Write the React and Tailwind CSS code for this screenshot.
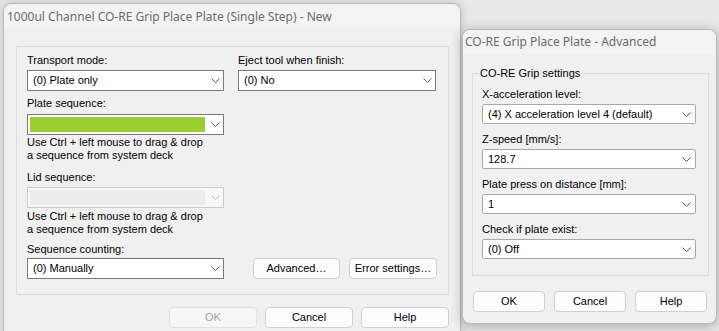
function Chevron({ disabled }) {
  return (
    <svg width="9" height="5" viewBox="0 0 9 5" className="shrink-0">
      <polyline points="0.5,0.5 4.5,4.5 8.5,0.5" fill="none" stroke={disabled ? '#c4c4c4' : '#5a5a5a'} strokeWidth="1" />
    </svg>
  );
}

function Combo({ value, fill }) {
  return (
    <div className="flex h-[21px] items-center border border-[#7a7a7a] bg-white pr-[3px]">
      {fill ? (
        <div className="ml-[2px] mr-auto h-[15px] w-[175px] bg-[#9acd32]" />
      ) : (
        <span className="mr-auto pl-[5px] leading-[15px]">{value}</span>
      )}
      <Chevron />
    </div>
  );
}

function DisabledCombo() {
  return (
    <div className="flex h-[21px] items-center border border-[#cccccc] bg-[#f7f7f7] pr-[3px]">
      <div className="ml-[2px] mr-auto h-[15px] w-[175px] bg-[#ececec]" />
      <Chevron disabled />
    </div>
  );
}

function SmallCombo({ value }) {
  return (
    <div className="flex h-[20px] items-center rounded-[2px] border border-[#a9a9a9] bg-white pr-[4px]">
      <span className="mr-auto pl-[5px] leading-[15px]">{value}</span>
      <Chevron />
    </div>
  );
}

function Button({ children, className = '', disabled }) {
  return (
    <button
      type="button"
      className={`flex h-[21px] items-center justify-center rounded-[4px] border leading-[15px] ${
        disabled ? 'border-[#e2e2e2] bg-[#f6f6f6] text-[#a3a3a3]' : 'border-[#d0d0d0] bg-[#fdfdfd] text-black'
      } ${className}`}
    >
      {children}
    </button>
  );
}

function Label({ children, className = '' }) {
  return <div className={`leading-[15px] ${className}`}>{children}</div>;
}

function Hint({ className = '' }) {
  return (
    <div className={`leading-[13px] ${className}`}>
      Use Ctrl + left mouse to drag &amp; drop
      <br />
      a sequence from system deck
    </div>
  );
}

function MainDialog() {
  return (
    <div className="absolute left-[3px] top-[3px] h-[345px] w-[458px] rounded-t-[8px] border border-[#b9b9b9] bg-[#f0f0f0] shadow-[0_0_10px_rgba(0,0,0,0.18)]">
      <div className="h-[25px] rounded-t-[8px] bg-[#f3f3f3] pl-[3px] font-['Noto_Sans',sans-serif] text-[12px] leading-[25px] text-[#6b6b6b]">
        1000ul Channel CO-RE Grip Place Plate (Single Step) - New
      </div>
      <div className="ml-[12px] mr-[11px] mt-[17px] h-[249px] border border-[#dcdcdc] pl-[10px] pt-[6px]">
        <div className="grid grid-cols-[197px_198px] gap-x-[14px]">
          <div className="flex flex-col">
            <Label className="mb-[2px]">Transport mode:</Label>
            <Combo value="(0) Plate only" />
            <Label className="mb-[3px] mt-[5px]">Plate sequence:</Label>
            <Combo fill />
            <Hint className="mt-[1px]" />
            <Label className="mb-[2px] mt-[8px]">Lid sequence:</Label>
            <DisabledCombo />
            <Hint className="mt-[2px]" />
            <Label className="mb-[1px] mt-[6px]">Sequence counting:</Label>
            <Combo value="(0) Manually" />
          </div>
          <div className="flex flex-col">
            <Label className="mb-[2px]">Eject tool when finish:</Label>
            <Combo value="(0) No" />
            <div className="mt-auto flex justify-end gap-[9px]">
              <Button className="w-[87px]">Advanced…</Button>
              <Button className="mr-[-1px] w-[88px]">Error settings…</Button>
            </div>
          </div>
        </div>
      </div>
      <div className="mr-[11px] mt-[12px] flex justify-end gap-[8px]">
        <Button className="w-[88px]" disabled>
          OK
        </Button>
        <Button className="w-[88px]">Cancel</Button>
        <Button className="w-[88px]">Help</Button>
      </div>
    </div>
  );
}

function AdvancedDialog() {
  return (
    <div className="absolute left-[462px] top-[29px] h-[295px] w-[255px] rounded-[8px] border border-[#b9b9b9] bg-[#f0f0f0] shadow-[0_2px_12px_rgba(0,0,0,0.28)]">
      <div className="h-[24px] rounded-t-[8px] bg-[#f3f3f3] pl-[2px] font-['Noto_Sans',sans-serif] text-[12px] leading-[24px] text-[#6b6b6b]">
        CO-RE Grip Place Plate - Advanced
      </div>
      <fieldset className="ml-[9px] mt-[12px] w-[237px] border border-[#dcdcdc]">
        <legend className="ml-[6px] px-[1px] leading-[15px]">CO-RE Grip settings</legend>
        <div className="flex flex-col gap-[8px] pb-[16px] pl-[9px] pr-[12px] pt-[6px]">
          <div>
            <Label className="mb-[2px]">X-acceleration level:</Label>
            <SmallCombo value="(4) X acceleration level 4 (default)" />
          </div>
          <div>
            <Label className="mb-[2px]">Z-speed [mm/s]:</Label>
            <SmallCombo value="128.7" />
          </div>
          <div>
            <Label className="mb-[2px]">Plate press on distance [mm]:</Label>
            <SmallCombo value="1" />
          </div>
          <div>
            <Label className="mb-[2px]">Check if plate exist:</Label>
            <SmallCombo value="(0) Off" />
          </div>
        </div>
      </fieldset>
      <div className="ml-[10px] mt-[15px] flex gap-[9px]">
        <Button className="h-[20px] w-[72px]">OK</Button>
        <Button className="h-[20px] w-[72px]">Cancel</Button>
        <Button className="h-[20px] w-[72px]">Help</Button>
      </div>
    </div>
  );
}

export default function App() {
  return (
    <div className="relative h-[331px] w-[719px] overflow-hidden bg-[#e8e8e8] font-['Liberation_Sans',Arial,sans-serif] text-[11px] text-black">
      <MainDialog />
      <AdvancedDialog />
    </div>
  );
}
